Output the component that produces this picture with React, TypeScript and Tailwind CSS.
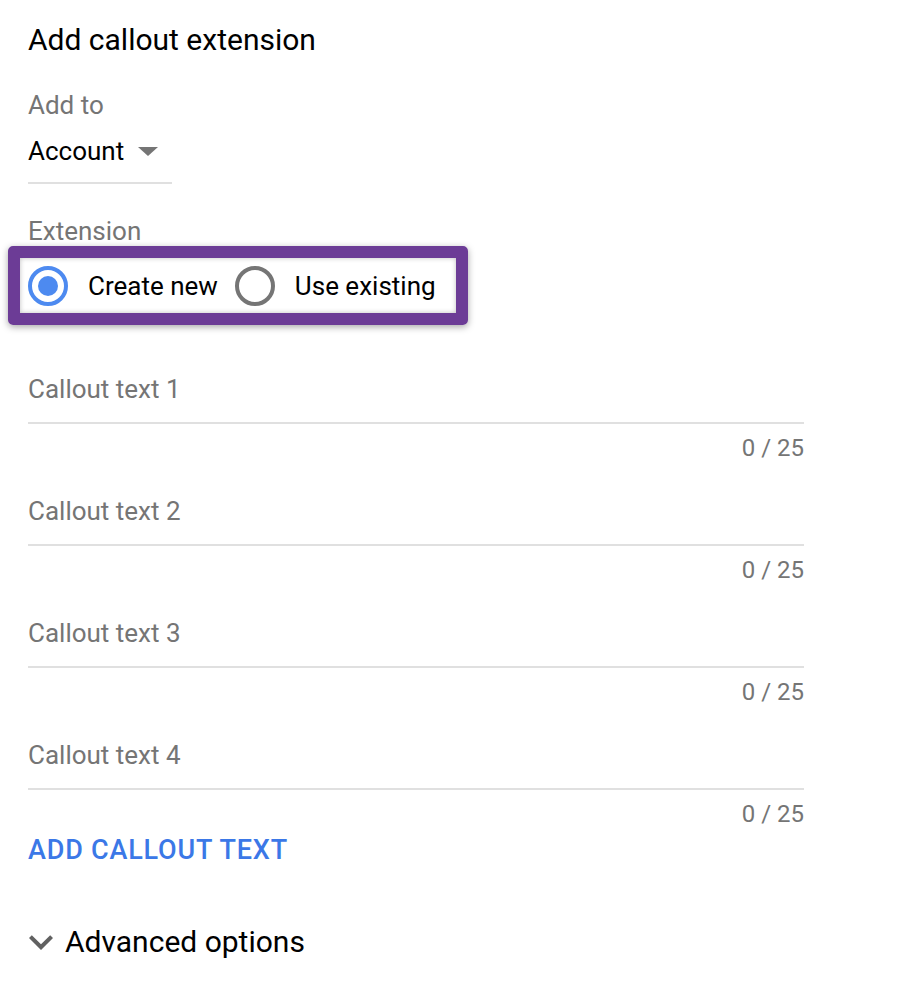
import { useState } from 'react';

const fields = ['Callout text 1', 'Callout text 2', 'Callout text 3', 'Callout text 4'];

export default function App() {
  const [mode, setMode] = useState<'new' | 'existing'>('new');

  return (
    <div className="min-h-screen bg-white pl-[28px] pt-[22px] font-['Roboto',sans-serif] text-black">
      {/* Header */}
      <h1 className="text-[30px] leading-[36px] font-normal">Add callout extension</h1>

      {/* Add to */}
      <p className="mt-[31px] text-[26px] leading-[32px] text-[#757575]">Add to</p>
      <button className="mt-[14px] flex items-center gap-[14px] text-[26px] leading-[32px]">
        <span>Account</span>
        <svg width="20" height="10" viewBox="0 0 20 10" className="mt-px">
          <polygon points="0,0 20,0 10,9" fill="#757575" />
        </svg>
      </button>
      <div className="mt-[15px] h-[2px] w-[144px] bg-[#e0e0e0]" />

      {/* Extension */}
      <p className="mt-[32px] text-[26px] leading-[30px] text-[#757575]">Extension</p>
      <div className="-ml-[20px] w-fit rounded-[5px] border-[12px] border-[#6c3c96] shadow-[0_2px_7px_rgba(0,0,0,0.35)]">
        <div className="flex h-[55px] items-center bg-white pl-[8px] pr-[20px] shadow-[inset_0_0_5px_rgba(0,0,0,0.25)]">
          <RadioOption label="Create new" checked={mode === 'new'} onClick={() => setMode('new')} />
          <div className="w-[17px]" />
          <RadioOption label="Use existing" checked={mode === 'existing'} onClick={() => setMode('existing')} />
        </div>
      </div>

      {/* Callout fields */}
      <div className="mt-[48px] w-[776px]">
        {fields.map((f, i) => (
          <div key={f} className={i > 0 ? 'mt-[33px]' : ''}>
            <input
              placeholder={f}
              className="block w-full bg-transparent text-[26px] leading-[32px] h-[32px] text-black placeholder-[#757575] outline-none"
            />
            <div className="mt-[17px] h-[2px] w-full bg-[#e0e0e0]" />
            <p className="mt-[10px] text-right text-[24px] leading-[28px] text-[#757575]">0 / 25</p>
          </div>
        ))}
      </div>

      <button className="mt-[6px] block text-[27px] leading-[32px] font-medium tracking-[0.8px] text-[#3b78e7]">
        ADD CALLOUT TEXT
      </button>

      {/* Advanced */}
      <button className="mt-[59px] flex items-center gap-[12px] text-[30px] leading-[34px]">
        <svg width="24" height="16" viewBox="6 8 12 8" className="ml-[1px]">
          <path d="M16.59 8.59L12 13.17 7.41 8.59 6 10l6 6 6-6z" fill="#616161" />
        </svg>
        <span>Advanced options</span>
      </button>
    </div>
  );
}

function RadioOption({ label, checked, onClick }: { label: string; checked: boolean; onClick: () => void }) {
  return (
    <button onClick={onClick} className="flex items-center gap-[20px]">
      <span
        className={`flex h-[40px] w-[40px] items-center justify-center rounded-full border-[4px] ${
          checked ? 'border-[#4d8af0]' : 'border-[#757575]'
        }`}
      >
        {checked && <span className="h-[20px] w-[20px] rounded-full bg-[#4d8af0]" />}
      </span>
      <span className="text-[26px] leading-[30px]">{label}</span>
    </button>
  );
}
